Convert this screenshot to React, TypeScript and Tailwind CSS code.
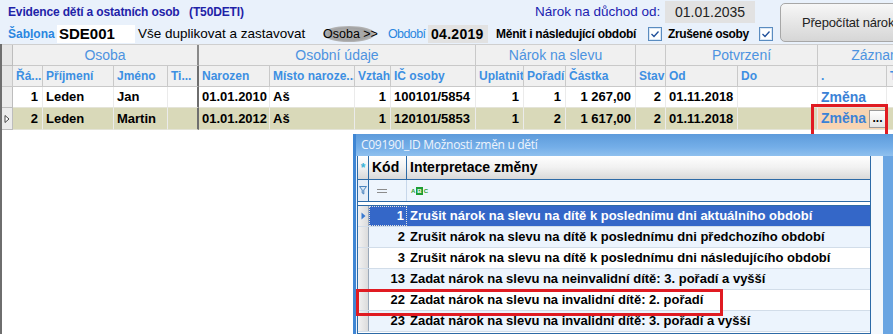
import React from "react";

const F = "font-['Liberation_Sans',Arial,sans-serif]";

function Check() {
  return (
    <svg width="14" height="14" viewBox="0 0 14 14" className="block shrink-0">
      <rect x="0.5" y="0.5" width="13" height="13" fill="#ffffff" stroke="#5a8cc0" />
      <rect x="1.5" y="1.5" width="11" height="11" fill="none" stroke="#dbe7f4" />
      <path d="M3.5 7 L6 9.5 L10.5 4.5" fill="none" stroke="#1f4f9a" strokeWidth="1.3" />
    </svg>
  );
}

type Col = { w: number; h?: string; a?: "r" | "l" };
const cols: Col[] = [
  { w: 13 },
  { w: 30, h: "Řá...", a: "r" },
  { w: 71, h: "Příjmení" },
  { w: 54, h: "Jméno" },
  { w: 29, h: "Ti..." },
  { w: 71, h: "Narozen" },
  { w: 85, h: "Místo naroze..." },
  { w: 36, h: "Vztah", a: "r" },
  { w: 85, h: "IČ osoby" },
  { w: 48, h: "Uplatnit", a: "r" },
  { w: 42, h: "Pořadí", a: "r" },
  { w: 70, h: "Částka", a: "r" },
  { w: 30, h: "Stav", a: "r" },
  { w: 72, h: "Od" },
  { w: 80, h: "Do" },
  { w: 69, h: "." },
  { w: 30, h: "T" },
];

const rows: string[][] = [
  ["1", "Leden", "Jan", "", "01.01.2010", "Aš", "1", "100101/5854", "1", "1", "1 267,00", "2", "01.11.2018", "", "Změna", ""],
  ["2", "Leden", "Martin", "", "01.01.2012", "Aš", "1", "120101/5853", "1", "2", "1 617,00", "2", "01.11.2018", "", "Změna", ""],
];

const groups = [
  { w: 184, t: "Osoba" },
  { w: 277, t: "Osobní údaje" },
  { w: 160, t: "Nárok na slevu" },
  { w: 30, t: "" },
  { w: 152, t: "Potvrzení" },
  { w: 118, t: "Záznam" },
];

const popupRows = [
  ["1", "Zrušit nárok na slevu na dítě k poslednímu dni aktuálního období"],
  ["2", "Zrušit nárok na slevu na dítě k poslednímu dni předchozího období"],
  ["3", "Zrušit nárok na slevu na dítě k poslednímu dni následujícího období"],
  ["13", "Zadat nárok na slevu na neinvalidní dítě: 3. pořadí a vyšší"],
  ["22", "Zadat nárok na slevu na invalidní dítě: 2. pořadí"],
  ["23", "Zadat nárok na slevu na invalidní dítě: 3. pořadí a vyšší"],
];

export default function App() {
  return (
    <div className={`${F} relative w-[893px] h-[334px] overflow-hidden bg-white`}>
      {/* top bar */}
      <div className="flex h-[44px] bg-[#e9f1fb]">
        <div className="w-[780px] shrink-0 flex flex-col">
          <div className="flex h-[24px] items-center">
            <div className="w-[535px] shrink-0 pl-[8px] text-[12px] font-bold text-[#1f23a8] whitespace-pre tracking-[-0.15px]">
              {"Evidence dětí a ostatních osob   (T50DETI)"}
            </div>
            <div className="w-[130px] shrink-0 text-[13.5px] text-[#1a22b0]">Nárok na důchod od:</div>
            <div className="w-[90px] shrink-0 h-[22px] bg-[#e2e2e2] flex items-center justify-center text-[14px] text-[#222]">
              01.01.2035
            </div>
          </div>
          <div className="flex h-[20px] items-center">
            <div className="w-[57px] shrink-0 pl-[8px] text-[12px] font-bold text-[#2a86e0]">
              Šab<span className="underline">l</span>ona
            </div>
            <div className="w-[78px] shrink-0 h-[18px] bg-white pl-[2px] text-[15px] font-bold text-black leading-[18px]">SDE001</div>
            <div className="w-[188px] shrink-0 pl-[3px] text-[13.5px] text-black">Vše duplikovat a zastavovat</div>
            <div className="w-[52px] shrink-0 h-[16px] rounded-[50%] bg-[radial-gradient(ellipse_at_center,#b4b4b4_0%,#a2a2a2_55%,#dedede_100%)] text-[12.5px] text-black leading-[16px] text-center whitespace-nowrap">
              Osoba &gt;&gt;
            </div>
            <div className="w-[13px] shrink-0" />
            <div className="w-[40px] shrink-0 text-[12.5px] text-[#2a86e0] tracking-[-0.6px]">Období</div>
            <div className="w-[60px] shrink-0 h-[18px] bg-[#e2e2e2] text-[14px] font-bold text-black leading-[18px] pl-[3px] tracking-[0.3px]">04.2019</div>
            <div className="w-[8px] shrink-0" />
            <div className="w-[152px] shrink-0 text-[12px] font-bold text-black tracking-[-0.25px] whitespace-nowrap">Měnit i následující období</div>
            <Check />
            <div className="w-[6px] shrink-0" />
            <div className="w-[91px] shrink-0 text-[12px] font-bold text-black tracking-[-0.35px] whitespace-nowrap">Zrušené osoby</div>
            <Check />
          </div>
        </div>
        <div className="pt-[3px] shrink-0">
          <div className="w-[130px] h-[39px] rounded-[5px] border border-[#a7a7a7] bg-[linear-gradient(#f7f7f7,#e6e6e6_50%,#d6d6d6)] flex items-center pl-[21px] text-[13px] tracking-[-0.2px] text-[#222] whitespace-nowrap">
            Přepočítat nárok
          </div>
        </div>
      </div>

      {/* table */}
      <div className="border-l-2 border-[#6e6e6e] h-[290px]">
        {/* group header */}
        <div className="flex h-[22px] bg-[#f0f0f0] border-t border-[#cfcfcf]">
          <div className="w-[11px] shrink-0 border-r border-b border-[#bdbdbd] bg-[#e6e6e6]" />
          {groups.map((g, i) => (
            <div
              key={i}
              className={`shrink-0 border-b border-[#c9c9c9] flex items-center justify-center text-[14px] text-[#4d93e0] whitespace-nowrap ${i === 0 ? "border-r-2 border-r-[#8a8a8a]" : "border-r"}`}
              style={{ width: g.w + (i === 0 ? 2 : 0) }}
            >
              {g.t}
            </div>
          ))}
        </div>
        {/* column header */}
        <div className="flex h-[21px] bg-[#f0f0f0]">
          {cols.map((c, i) => (
            <div
              key={i}
              className={`shrink-0 border-b border-[#c9c9c9] flex items-center px-[3px] text-[12px] font-bold text-[#3d8fe2] whitespace-nowrap overflow-hidden ${i === 4 ? "border-r-2 border-r-[#6e6e6e]" : "border-r"} ${i === 0 ? "bg-[#e6e6e6] border-[#bdbdbd]" : ""}`}
              style={{ width: i === 0 ? 11 : i === 4 ? c.w + 2 : c.w }}
            >
              {c.h}
            </div>
          ))}
        </div>
        {/* data rows */}
        {rows.map((r, ri) => (
          <div key={ri} className={`flex ${ri === 0 ? "h-[21px] bg-white" : "h-[22px] bg-[#d9d9b9]"}`}>
            <div className="w-[11px] shrink-0 border-r border-b border-[#bdbdbd] bg-[#ececec] flex items-center justify-center">
              {ri === 1 && (
                <svg width="6" height="8" viewBox="0 0 6 8">
                  <path d="M1 0.5 L5 4 L1 7.5 Z" fill="#fff" stroke="#333" strokeWidth="0.9" />
                </svg>
              )}
            </div>
            {r.map((v, ci) => {
              const c = cols[ci + 1];
              const isZ = ci === 14;
              return (
                <div
                  key={ci}
                  className={`shrink-0 border-b border-[#e4e4d8] flex items-center text-[13px] font-bold whitespace-nowrap overflow-hidden ${ci === 3 ? "border-r-2 border-r-[#6e6e6e]" : "border-r border-r-[#ebebeb]"} ${c.a === "r" ? "justify-end pr-[4px]" : "pl-[3px]"} ${isZ ? "text-[14px] text-[#3b82d6]" : "text-black"} ${isZ && ri === 1 ? "bg-[#f8d4b2] relative" : ""}`}
                  style={{ width: ci === 3 ? c.w + 2 : c.w }}
                >
                  {v}
                  {isZ && ri === 1 && (
                    <div className="absolute right-[0px] top-[2px] w-[17px] h-[18px] border border-[#9a9a9a] bg-[linear-gradient(#ffffff,#e4e4e4)] flex items-center justify-center text-[12px] text-black leading-none pb-[3px]">
                      ...
                    </div>
                  )}
                </div>
              );
            })}
          </div>
        ))}
      </div>

      {/* red highlight on Změna cell */}
      <div className="absolute left-[811px] top-[104px] w-[77px] h-[33px] border-[3px] border-[#e01b22]" />

      {/* popup */}
      <div className="absolute left-[353px] top-[134px] w-[545px] h-[200px] bg-[#6aa5e2] border-l-[3px] border-[#3f86d4]">
        <div className="h-[22px] bg-[linear-gradient(#5d9bdb,#74aee8_60%,#8fc0ee)] flex items-center pl-[5px] text-[12px] text-[#eef4fc] font-['Open_Sans',sans-serif] tracking-[-0.3px]">
          C09190I_ID Možnosti změn u dětí
        </div>
        <div className="flex h-[178px]">
          <div className="w-[1px] bg-[#e9f2fc]" />
          <div className="w-[514px] bg-white border border-[#2d6aa6] border-t-0">
            {/* header */}
            <div className="flex h-[24px] bg-[linear-gradient(#ffffff,#f1f1f1_50%,#d9d9d9)] border-b border-[#2d6aa6]">
              <div className="w-[11px] border-r border-[#2d6aa6] flex items-center justify-center text-[12px] font-bold text-[#3ab4d8]">*</div>
              <div className="w-[38px] border-r border-[#2d6aa6] flex items-center pl-[3px] text-[14px] font-bold text-black">Kód</div>
              <div className="flex-1 flex items-center pl-[3px] text-[14px] font-bold text-black">Interpretace změny</div>
            </div>
            {/* filter row */}
            <div className="flex h-[22px] bg-[#eef5fd] border-b border-[#2d6aa6]">
              <div className="w-[11px] border-r border-[#2d6aa6] bg-[#e6eef8] flex items-center justify-center">
                <svg width="8" height="9" viewBox="0 0 8 9">
                  <path d="M0.5 0.5 H7.5 L4.8 4 V8 L3.2 7 V4 Z" fill="#dce8f4" stroke="#3a78b8" strokeWidth="0.9" />
                </svg>
              </div>
              <div className="w-[38px] border-r border-[#c7d7ea] flex items-center pl-[8px]">
                <div className="w-[10px] flex flex-col gap-[2px]">
                  <div className="h-[1px] bg-[#8c8c8c]" />
                  <div className="h-[1px] bg-[#8c8c8c]" />
                </div>
              </div>
              <div className="flex-1 flex items-center pl-[3px]">
                <div className="flex items-center text-[6px] font-bold leading-none">
                  <span className="text-[#2aa02a] px-[1px]">A</span>
                  <span className="bg-[#1e9e34] text-white px-[1px] py-[1px]">B</span>
                  <span className="text-[#2aa02a] px-[1px]">C</span>
                </div>
              </div>
            </div>
            <div className="h-[4px] bg-white border-b border-[#2d6aa6]" />
            {popupRows.map((r, i) => {
              const sel = i === 0;
              const bg = sel ? "bg-[#3467c8]" : i % 2 === 1 ? "bg-[#ecf4fd]" : "bg-white";
              return (
                <div key={i} className={`flex h-[21px] border-b border-[#d2dde9] ${bg}`}>
                  <div className="w-[11px] border-r border-[#9aa8b8] bg-[linear-gradient(90deg,#f2f2f2,#dcdcdc)] flex items-center justify-center">
                    {sel && (
                      <svg width="5" height="8" viewBox="0 0 5 8">
                        <path d="M0.5 0.5 L4.5 4 L0.5 7.5 Z" fill="#3a7ad0" />
                      </svg>
                    )}
                  </div>
                  <div className={`w-[38px] flex items-center justify-end pr-[2px] text-[13px] font-bold ${sel ? "text-white border border-dotted border-[#e0e0e0]" : "text-black"}`}>
                    {r[0]}
                  </div>
                  <div className={`flex-1 flex items-center pl-[3px] text-[13px] font-bold whitespace-nowrap ${sel ? "text-white" : "text-black"}`}>
                    {r[1]}
                  </div>
                </div>
              );
            })}
          </div>
          <div className="w-[12px] bg-[#f4f8fc]" />
        </div>
      </div>

      {/* red highlight on row 22 */}
      <div className="absolute left-[356px] top-[289px] w-[367px] h-[27px] border-[3px] border-[#e01b22]" />
    </div>
  );
}
